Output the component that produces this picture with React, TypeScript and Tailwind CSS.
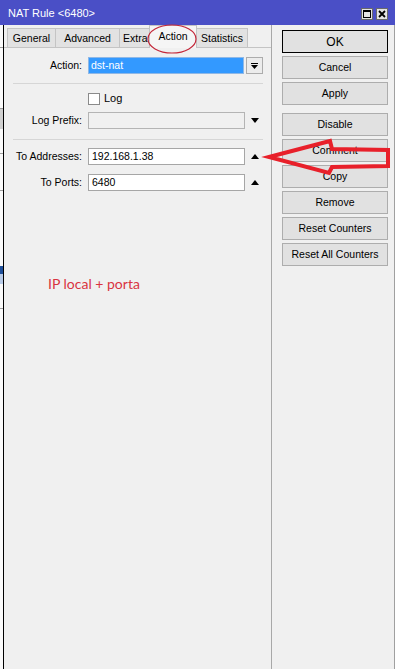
import React from "react";

function Btn({ label, def }: { label: string; def?: boolean }) {
  return (
    <div
      className={
        "w-[106px] h-[23px] flex items-center justify-center bg-[#e1e1e1] " +
        (def ? "border border-black" : "border border-[#adadad]")
      }
    >
      <span className={def ? "text-[12px]" : ""}>{label}</span>
    </div>
  );
}

function UpTri() {
  return (
    <svg width="8" height="6" viewBox="0 0 8 6" className="block">
      <polygon points="0,5 8,5 4,0" fill="#000" />
    </svg>
  );
}

function DownTri() {
  return (
    <svg width="8" height="6" viewBox="0 0 8 6" className="block">
      <polygon points="0,0 8,0 4,5" fill="#000" />
    </svg>
  );
}

export default function App() {
  const tabs = [
    { name: "General", w: "w-[49px]" },
    { name: "Advanced", w: "w-[65px]" },
    { name: "Extra", w: "w-[31px]" },
    { name: "Action", w: "w-[48px]", active: true },
    { name: "Statistics", w: "w-[52px]" },
  ];
  return (
    <div className="relative w-[395px] h-[669px] overflow-hidden flex flex-col bg-[#f0f0f0] font-['Liberation_Sans',Arial,sans-serif] text-[10.5px] text-black leading-none">
      {/* Title bar */}
      <div className="h-[25px] shrink-0 bg-[#4a4fc6] flex items-center pl-[8px] pr-[7px]">
        <span className="text-white text-[11px] mt-[1px]">NAT Rule &lt;6480&gt;</span>
        <div className="ml-auto flex gap-[3px] mt-[2px]">
          <div className="w-[12px] h-[12px] bg-[#e4e4e4] border border-[#6a6a6a] flex items-center justify-center">
            <div className="w-[8px] h-[8px] border border-black border-t-2" />
          </div>
          <div className="w-[12px] h-[12px] bg-[#e4e4e4] border border-[#6a6a6a] flex items-center justify-center">
            <svg width="8" height="8" viewBox="0 0 8 8" className="block">
              <path d="M1 1 L7 7 M7 1 L1 7" stroke="#000" strokeWidth="1.8" />
            </svg>
          </div>
        </div>
      </div>

      <div className="flex flex-1 min-h-0">
        {/* background window strip */}
        <div className="w-[3px] flex flex-col bg-[#fafafa]">
          <div className="h-[22px]" />
          <div className="h-[1px] bg-[#9a9a9a]" />
          <div className="h-[60px]" />
          <div className="h-[1px] bg-[#9a9a9a]" />
          <div className="h-[20px] bg-[#d0d0d0]" />
          <div className="h-[24px]" />
          <div className="h-[1px] bg-[#a0a0a0]" />
          <div className="h-[36px]" />
          <div className="h-[1px] bg-[#a0a0a0]" />
          <div className="h-[75px]" />
          <div className="h-[8px] bg-[#1f4f9a]" />
          <div className="h-[10px] bg-[#b8cbe8]" />
          <div className="h-[24px]" />
          <div className="h-[1px] bg-[#a0a0a0]" />
        </div>
        <div className="w-[1px] bg-black" />

        {/* left: tabs + panel */}
        <div className="w-[268px] flex flex-col border-r border-[#a8a8a8]">
          <div className="h-[22px] flex items-end pl-[3px] shrink-0">
            {tabs.map((t, i) =>
              t.active ? (
                <div
                  key={t.name}
                  className={
                    t.w +
                    " h-[23px] -mb-px -ml-px relative z-10 bg-[#f5f5f5] border-l border-t border-r border-[#c4c4c4] flex items-center justify-center pb-[2px]"
                  }
                >
                  {t.name}
                </div>
              ) : (
                <div
                  key={t.name}
                  className={
                    t.w +
                    " h-[19px] bg-[#e2e2e2] border-l border-t border-r border-[#c4c4c4] flex items-center justify-center " +
                    (i > 0 ? "-ml-px" : "") +
                    (t.name === "Extra" ? " justify-start pl-[3px]" : "")
                  }
                >
                  {t.name}
                </div>
              )
            )}
          </div>

          <div className="flex-1 border-t border-[#c4c4c4] flex flex-col pt-[9px]">
            {/* Action */}
            <div className="flex items-center h-[17px]">
              <div className="w-[78px] text-right">Action:</div>
              <div className="ml-[6px] w-[156px] h-[17px] bg-[#3399ff] border border-[#8fb8e6] flex items-center pl-[2px] text-white">
                dst-nat
              </div>
              <div className="ml-[2px] w-[17px] h-[17px] bg-[#ececec] border border-[#acacac] flex flex-col items-center justify-center gap-[1px]">
                <div className="w-[7px] h-[1px] bg-black" />
                <svg width="7" height="4" viewBox="0 0 7 4" className="block">
                  <polygon points="0,0 7,0 3.5,4" fill="#000" />
                </svg>
              </div>
            </div>

            <div className="ml-[9px] mt-[9px] w-[250px] h-[1px] bg-[#d6d6d6]" />

            {/* Log */}
            <div className="flex items-center h-[13px] mt-[8px]">
              <div className="ml-[84px] w-[12px] h-[12px] bg-white border border-[#8a8a8a]" />
              <span className="ml-[4px] text-[11px]">Log</span>
            </div>

            {/* Log prefix */}
            <div className="flex items-center h-[17px] mt-[7px]">
              <div className="w-[78px] text-right">Log Prefix:</div>
              <div className="ml-[6px] w-[157px] h-[17px] bg-[#f0f0f0] border border-[#b4b4b4]" />
              <div className="ml-[6px]">
                <DownTri />
              </div>
            </div>

            <div className="ml-[9px] mt-[10px] w-[250px] h-[1px] bg-[#d6d6d6]" />

            {/* To Addresses */}
            <div className="flex items-center h-[17px] mt-[8px]">
              <div className="w-[78px] text-right">To Addresses:</div>
              <div className="ml-[6px] w-[157px] h-[17px] bg-white border border-[#a6a6a6] flex items-center pl-[3px]">
                192.168.1.38
              </div>
              <div className="ml-[6px]">
                <UpTri />
              </div>
            </div>

            {/* To Ports */}
            <div className="flex items-center h-[17px] mt-[9px]">
              <div className="w-[78px] text-right">To Ports:</div>
              <div className="ml-[6px] w-[157px] h-[17px] bg-white border border-[#a6a6a6] flex items-center pl-[3px]">
                6480
              </div>
              <div className="ml-[6px]">
                <UpTri />
              </div>
            </div>

            <div className="mt-[86px] ml-[44px] font-['Lato',sans-serif] text-[14px] text-[#d9343f]">
              IP local + porta
            </div>
          </div>
        </div>

        {/* right: buttons */}
        <div className="flex-1 border-r border-[#a0a0a0] pl-[10px] pt-[5px] flex flex-col">
          <div className="flex flex-col gap-[3px]">
            <Btn label="OK" def />
            <Btn label="Cancel" />
            <Btn label="Apply" />
          </div>
          <div className="flex flex-col gap-[3px] mt-[8px]">
            <Btn label="Disable" />
            <Btn label="Comment" />
            <Btn label="Copy" />
            <Btn label="Remove" />
            <Btn label="Reset Counters" />
            <Btn label="Reset All Counters" />
          </div>
        </div>
      </div>

      {/* annotations overlay */}
      <svg
        className="absolute left-0 top-0 z-20 pointer-events-none"
        width="395"
        height="669"
        viewBox="0 0 395 669"
      >
        <ellipse cx="172" cy="39" rx="24" ry="14" fill="none" stroke="#c4283a" strokeWidth="1.2" />
        <polygon
          points="269,157 330,141 332,149 388,150 388,166 332,167 329,173"
          fill="none"
          stroke="#e8202a"
          strokeWidth="4"
          strokeLinejoin="miter"
        />
      </svg>
    </div>
  );
}
